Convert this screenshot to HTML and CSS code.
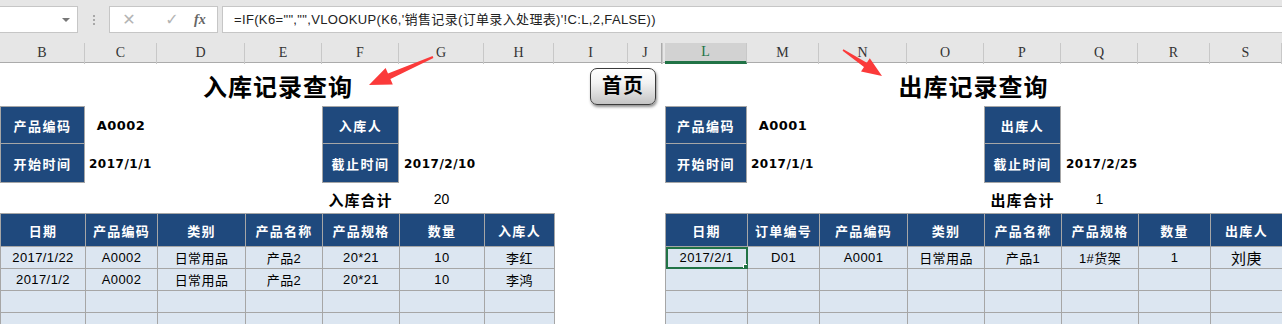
FILE: index.html
```html
<!DOCTYPE html>
<html lang="zh-CN">
<head>
    <meta charset="UTF-8">
    <title>出入库记录查询</title>
    <link rel="stylesheet" href="styles.css">
</head>
<body>
<div class="app">
    <!-- formula bar -->
    <div class="toolbar">
        <div class="namebox"><span class="caret"></span></div>
        <div class="grip"><i></i><i></i><i></i></div>
        <div class="fxbox">
            <span class="fx-btn">&#x2715;</span>
            <span class="fx-btn">&#x2713;</span>
            <span class="fx-label">fx</span>
        </div>
        <div class="formula">=IF(K6="","",VLOOKUP(K6,'销售记录(订单录入处理表)'!C:L,2,FALSE))</div>
    </div>

    <!-- column letters -->
    <div class="colheads">
        <div class="colhead">B</div>
        <div class="colhead">C</div>
        <div class="colhead">D</div>
        <div class="colhead">E</div>
        <div class="colhead">F</div>
        <div class="colhead">G</div>
        <div class="colhead">H</div>
        <div class="colhead">I</div>
        <div class="colhead">J</div>
        <div class="colhead hidden-col"></div>
        <div class="colhead on">L</div>
        <div class="colhead">M</div>
        <div class="colhead">N</div>
        <div class="colhead">O</div>
        <div class="colhead">P</div>
        <div class="colhead">Q</div>
        <div class="colhead">R</div>
        <div class="colhead">S</div>
    </div>

    <!-- sheet -->
    <div class="sheet">
        <div class="title title-in">入库记录查询</div>
        <div class="title title-out">出库记录查询</div>

        <!-- 入库 query -->
        <div class="label" style="grid-area: 2 / 1;">产品编码</div>
        <div class="value center" style="grid-area: 2 / 2;">A0002</div>
        <div class="label" style="grid-area: 2 / 5;">入库人</div>
        <div class="label next" style="grid-area: 3 / 1;">开始时间</div>
        <div class="value" style="grid-area: 3 / 2;">2017/1/1</div>
        <div class="label next" style="grid-area: 3 / 5;">截止时间</div>
        <div class="value wide" style="grid-area: 3 / 6;">2017/2/10</div>
        <div class="total" style="grid-area: 4 / 5;">入库合计</div>
        <div class="total-num" style="grid-area: 4 / 6;">20</div>

        <!-- 出库 query -->
        <div class="label" style="grid-area: 2 / 11;">产品编码</div>
        <div class="value center" style="grid-area: 2 / 12;">A0001</div>
        <div class="label" style="grid-area: 2 / 15;">出库人</div>
        <div class="label next" style="grid-area: 3 / 11;">开始时间</div>
        <div class="value" style="grid-area: 3 / 12;">2017/1/1</div>
        <div class="label next" style="grid-area: 3 / 15;">截止时间</div>
        <div class="value wide" style="grid-area: 3 / 16;">2017/2/25</div>
        <div class="total" style="grid-area: 4 / 15;">出库合计</div>
        <div class="total-num" style="grid-area: 4 / 16;">1</div>

        <!-- 入库 records -->
        <table class="records records-in">
            <colgroup>
                <col style="width: 85px;"><col style="width: 72px;"><col style="width: 88px;"><col style="width: 77px;">
                <col style="width: 77px;"><col style="width: 85px;"><col style="width: 70px;">
            </colgroup>
            <tr><th>日期</th><th>产品编码</th><th>类别</th><th>产品名称</th><th>产品规格</th><th>数量</th><th>入库人</th></tr>
            <tr><td>2017/1/22</td><td>A0002</td><td>日常用品</td><td>产品2</td><td>20*21</td><td>10</td><td>李红</td></tr>
            <tr><td>2017/1/2</td><td>A0002</td><td>日常用品</td><td>产品2</td><td>20*21</td><td>10</td><td>李鸿</td></tr>
            <tr><td></td><td></td><td></td><td></td><td></td><td></td><td></td></tr>
            <tr><td></td><td></td><td></td><td></td><td></td><td></td><td></td></tr>
        </table>

        <!-- 出库 records -->
        <table class="records records-out">
            <colgroup>
                <col style="width: 82px;"><col style="width: 72px;"><col style="width: 88px;"><col style="width: 77px;">
                <col style="width: 77px;"><col style="width: 77px;"><col style="width: 72px;"><col style="width: 72px;">
            </colgroup>
            <tr><th>日期</th><th>订单编号</th><th>产品编码</th><th>类别</th><th>产品名称</th><th>产品规格</th><th>数量</th><th>出库人</th></tr>
            <tr><td class="sel">2017/2/1</td><td>D01</td><td>A0001</td><td>日常用品</td><td>产品1</td><td>1#货架</td><td>1</td><td class="big">刘庚</td></tr>
            <tr><td></td><td></td><td></td><td></td><td></td><td></td><td></td><td></td></tr>
            <tr><td></td><td></td><td></td><td></td><td></td><td></td><td></td><td></td></tr>
            <tr><td></td><td></td><td></td><td></td><td></td><td></td><td></td><td></td></tr>
        </table>
    </div>

    <!-- shapes floating over the sheet -->
    <div class="home-btn">首页</div>
    <svg class="arrows" width="1282" height="324" viewBox="0 0 1282 324">
        <polygon points="432.6,56.1 388,73.5 385.6,68 369,85 392.8,84.4 390.4,78.9 433.4,57.9" />
        <polygon points="843.4,49.3 866.8,62.8 869.8,58.2 882,76 861,71.6 864,67 842.6,50.7" />
    </svg>
</div>
</body>
</html>
```

FILE: styles.css
```css
body {
    margin: 0;
    padding: 0;
    font-family: "Liberation Sans", "Noto Sans CJK SC", sans-serif;
    color: #000;
    background-color: #fff;
    overflow: hidden;
}

.app {
    position: relative;
    width: 1282px;
    height: 324px;
    overflow: hidden;
}

/* formula bar */

.toolbar {
    height: 43px;
    background-color: #e6e6e6;
    display: flex;
    align-items: flex-start;
    padding-top: 6px;
    box-sizing: border-box;
}

.namebox {
    width: 78px;
    height: 27px;
    background-color: #fff;
    border: 1px solid #c6c6c6;
    border-left: none;
    box-sizing: border-box;
    position: relative;
}

.caret {
    position: absolute;
    right: 7px;
    top: 11px;
    border-left: 4px solid transparent;
    border-right: 4px solid transparent;
    border-top: 4px solid #777;
}

.grip {
    width: 31px;
    height: 27px;
    display: flex;
    flex-direction: column;
    align-items: center;
    justify-content: center;
    gap: 2px;
}

.grip i {
    width: 2px;
    height: 2px;
    background-color: #a8a8a8;
}

.fxbox {
    width: 109px;
    height: 27px;
    background-color: #fff;
    border: 1px solid #c6c6c6;
    box-sizing: border-box;
    display: flex;
    align-items: center;
    padding-left: 10px;
}

.fx-btn {
    width: 36px;
    color: #b4b4b4;
    font-family: "DejaVu Sans", sans-serif;
    font-size: 16px;
    text-align: center;
}

.fx-btn:first-child {
    width: 18px;
    margin-right: 16px;
}

.fx-label {
    margin-left: 4px;
    font-family: "Liberation Serif", serif;
    font-style: italic;
    font-weight: bold;
    font-size: 14px;
    color: #666;
}

.formula {
    flex: 1;
    height: 27px;
    margin-left: 4px;
    background-color: #fff;
    border: 1px solid #c6c6c6;
    border-right: none;
    box-sizing: border-box;
    padding-left: 11px;
    font-size: 13px;
    line-height: 25px;
    letter-spacing: 0.35px;
    color: #222;
    white-space: nowrap;
}

/* column letters */

.colheads {
    display: grid;
    grid-template-columns: 85px 72px 88px 77px 77px 85px 70px 74px 35px 2px 82px 72px 88px 77px 77px 77px 72px 72px;
    height: 19px;
    background-color: #e6e6e6;
    border-bottom: 1px solid #ababab;
}

.colhead {
    border-right: 1px solid #c8c8c8;
    font-family: "Liberation Serif", serif;
    font-size: 14px;
    line-height: 19px;
    text-align: center;
    color: #333;
}

.hidden-col {
    border-left: 1px solid #ababab;
    border-right: 1px solid #ababab;
    margin-left: -2px;
    width: 3px;
}

.colhead.on {
    background-color: #d2d2d2;
    color: #217346;
    border-bottom: 3px solid #217346;
    line-height: 18px;
}

/* sheet */

.sheet {
    display: grid;
    grid-template-columns: 85px 72px 88px 77px 77px 85px 70px 74px 35px 2px 82px 72px 88px 77px 77px 77px 72px 72px;
    grid-template-rows: 43px 38px 39px 30px 33px 22px 22px 22px 22px;
    border-left: 1px solid #c8c8c8;
    margin-left: -1px;
}

.title {
    grid-row: 1;
    display: flex;
    align-items: center;
    justify-content: center;
    padding-top: 2px;
    font-size: 24px;
    font-weight: bold;
    letter-spacing: 1px;
}

.title-in {
    grid-column: 3 / 6;
}

.title-out {
    grid-column: 13 / 17;
    padding-right: 10px;
}

.label {
    background-color: #1f497d;
    border: 1px solid #a6a6a6;
    color: #fff;
    font-weight: bold;
    font-size: 13px;
    letter-spacing: 1.5px;
    display: flex;
    align-items: center;
    justify-content: center;
}

.label.next {
    border-top: none;
}

.value {
    display: flex;
    align-items: center;
    padding-left: 4px;
    font-family: "DejaVu Sans", "Noto Sans CJK SC", sans-serif;
    font-weight: bold;
    font-size: 12px;
    letter-spacing: 0.5px;
    white-space: nowrap;
}

.value.center {
    justify-content: center;
    padding-left: 0;
    font-size: 13px;
}

.value.wide {
    padding-left: 5px;
}

.total {
    display: flex;
    align-items: center;
    justify-content: center;
    padding-top: 2px;
    font-size: 15px;
    font-weight: bold;
    letter-spacing: 1px;
}

.total-num {
    display: flex;
    align-items: center;
    justify-content: center;
    padding-top: 2px;
    font-size: 14px;
}

/* records tables */

.records {
    grid-row: 5 / 10;
    border-collapse: collapse;
    table-layout: fixed;
    width: 100%;
}

.records-in {
    grid-column: 1 / 8;
}

.records-out {
    grid-column: 11 / 19;
}

.records th,
.records td {
    border: 1px solid #a6a6a6;
    padding: 0;
    text-align: center;
    white-space: nowrap;
    overflow: hidden;
}

.records th {
    height: 32px;
    background-color: #1f497d;
    color: #fff;
    font-size: 13px;
    font-weight: bold;
    letter-spacing: 1.3px;
}

.records td {
    height: 21px;
    background-color: #dce6f1;
    font-size: 13px;
    letter-spacing: 0.4px;
}

.records td.big {
    font-size: 15px;
}

.records td.sel {
    position: relative;
    outline: 2px solid #217346;
    outline-offset: -2px;
}

.records td.sel::after {
    content: "";
    position: absolute;
    right: -3px;
    bottom: -3px;
    width: 5px;
    height: 5px;
    background-color: #217346;
    border: 1px solid #fff;
}

/* floating shapes */

.home-btn {
    position: absolute;
    left: 590px;
    top: 68px;
    width: 66px;
    height: 37px;
    box-sizing: border-box;
    border: 1px solid #3a3a3a;
    border-radius: 7px;
    background: linear-gradient(#ffffff, #f2f2f2 40%, #c4c4c4);
    box-shadow: 1px 2px 3px rgba(0, 0, 0, 0.45);
    font-size: 20px;
    font-weight: bold;
    text-align: center;
    line-height: 35px;
    letter-spacing: 1px;
}

.arrows {
    position: absolute;
    left: 0;
    top: 0;
    pointer-events: none;
}

.arrows polygon {
    fill: #fb3a3a;
}
```
